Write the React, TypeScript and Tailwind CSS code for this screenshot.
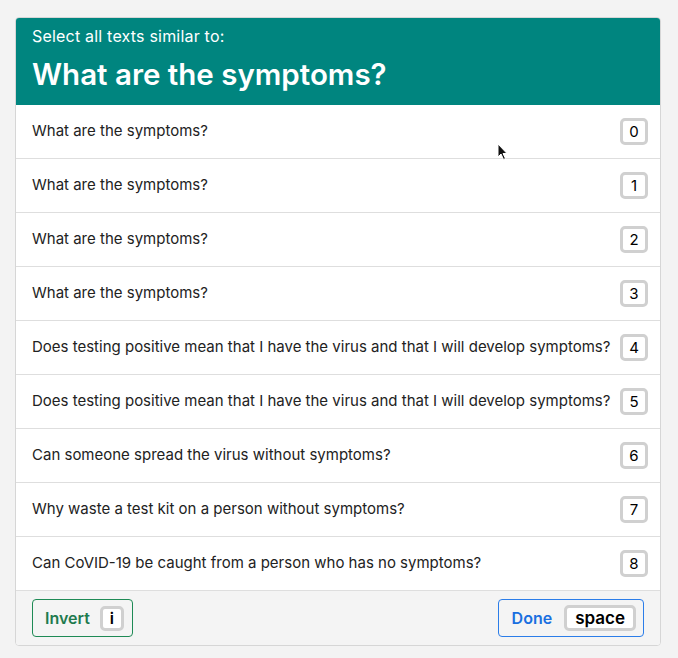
import React from 'react';

const rows = [
  'What are the symptoms?',
  'What are the symptoms?',
  'What are the symptoms?',
  'What are the symptoms?',
  'Does testing positive mean that I have the virus and that I will develop symptoms?',
  'Does testing positive mean that I have the virus and that I will develop symptoms?',
  'Can someone spread the virus without symptoms?',
  'Why waste a test kit on a person without symptoms?',
  'Can CoVID-19 be caught from a person who has no symptoms?',
];

const Kbd = ({ children, className = '' }: any) => (
  <span className={`inline-flex items-center justify-center rounded-[5px] border-[3px] border-[#d0d0d0] bg-white text-black leading-none ${className}`}>
    {children}
  </span>
);

export default function App() {
  return (
    <div className="relative min-h-[658px] w-[678px] bg-[#f3f3f3] pt-[17px] px-[15px]" style={{ fontFamily: 'Inter, "Open Sans", sans-serif' }}>
      <div className="w-[646px] rounded-[4px] border border-[#d6d6d6] overflow-hidden bg-white">
        {/* Header */}
        <div className="bg-[#00857f] text-white px-4 pt-[7px] pb-[13px]">
          <div className="text-[16px] leading-[22px] tracking-[0.2px]">Select all texts similar to:</div>
          <div className="text-[29.5px] font-semibold leading-[36px] mt-[9px]">What are the symptoms?</div>
        </div>

        {/* Rows */}
        <div>
          {rows.map((r, i) => (
            <div key={i} className="h-[54px] flex items-center justify-between pl-4 pr-[12px] border-b border-[#dedede] text-[15px] text-[#222]">
              <span>{r}</span>
              <Kbd className="min-w-[28px] h-[27px] px-[5px] text-[15px]">{i}</Kbd>
            </div>
          ))}
        </div>

        {/* Footer */}
        <div className="bg-[#f4f4f4] h-[54px] flex items-center justify-between px-4">
          <button className="h-[38px] pl-[12px] pr-[8px] flex items-center gap-[10px] rounded-[4px] border border-[#1e8a55] text-[#1e7a4e] font-semibold text-[16px]">
            Invert
            <Kbd className="w-[24px] h-[25px] text-[16px] font-semibold">i</Kbd>
          </button>
          <button className="h-[38px] pl-[13px] pr-[7px] flex items-center gap-[12px] rounded-[4px] border border-[#2b7de9] text-[#1a6fe0] font-semibold text-[16px]">
            Done
            <Kbd className="h-[26px] px-[8px] text-[17px] font-semibold">space</Kbd>
          </button>
        </div>
      </div>

      {/* mouse cursor */}
      <svg className="absolute left-[497px] top-[143px]" width="12" height="18" viewBox="0 0 12 18">
        <path d="M1 1 L1 14 L4 11 L6.5 16.5 L8.5 15.5 L6 10.5 L10 10.5 Z" fill="#111" stroke="#fff" strokeWidth="1" />
      </svg>
    </div>
  );
}
